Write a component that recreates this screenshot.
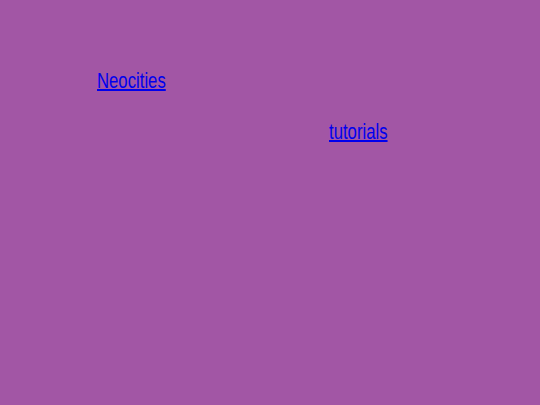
export default function App() {
  return (
    <div className="w-[540px] h-[405px] bg-[#a256a5] font-['Liberation_Sans',Arial,sans-serif] text-[22px] leading-none">
      <div className="pt-[70px] pl-[97px]">
        <a href="#" className="inline-block origin-left scale-x-[0.76] text-[#0000ee] underline decoration-2">Neocities</a>
      </div>
      <div className="pt-[29px] pl-[329px]">
        <a href="#" className="inline-block origin-left scale-x-[0.76] text-[#0000ee] underline decoration-2">tutorials</a>
      </div>
    </div>
  );
}
